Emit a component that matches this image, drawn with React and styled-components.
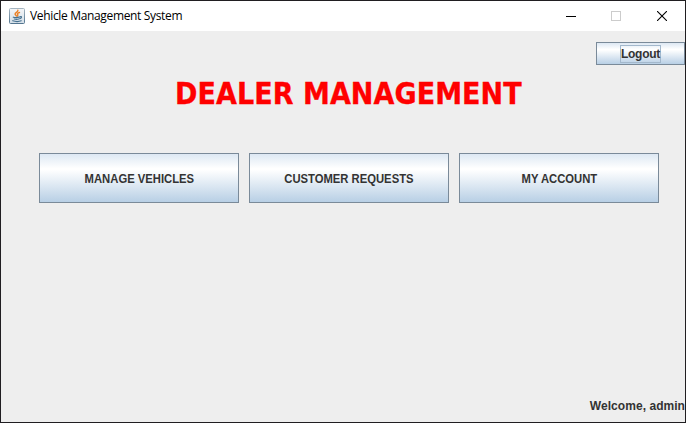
import React from "react";
import styled, { createGlobalStyle } from "styled-components";

const GlobalStyle = createGlobalStyle`
  * { box-sizing: border-box; }
  html, body { margin: 0; height: 100%; overflow: hidden; }
`;

const Window = styled.div`
  width: 686px;
  height: 423px;
  display: flex;
  flex-direction: column;
  border: 1px solid #201e21;
  background: #eeeeee;
  font-family: "Liberation Sans", Arial, sans-serif;
  color: #333333;
`;

const TitleBar = styled.header`
  height: 30px;
  flex: none;
  display: flex;
  align-items: center;
  padding-left: 8px;
  background: #ffffff;
`;

const Caption = styled.span`
  flex: 1;
  margin-left: 5px;
  font: 12px/16px "Open Sans", "Noto Sans", sans-serif;
  letter-spacing: -0.34px;
  color: #000000;
  white-space: nowrap;
`;

const WindowControl = styled.button`
  width: 46px;
  height: 30px;
  padding: 0;
  border: 0;
  background: transparent;
  display: grid;
  place-items: center;
  color: ${(p) => (p.disabled ? "#cccccc" : "#000000")};
`;

const Content = styled.main`
  flex: 1;
  display: flex;
  flex-direction: column;
`;

const TopActions = styled.div`
  display: flex;
  justify-content: flex-end;
  padding-top: 11px;
`;

const MetalButton = styled.button`
  width: ${(p) => p.$width}px;
  height: ${(p) => p.$height}px;
  display: flex;
  align-items: center;
  justify-content: center;
  padding: ${(p) => p.$padTop || 0}px 0 0;
  border: 1px solid #7a8a99;
  background: linear-gradient(#dde8f3 0%, #ffffff 30%, #ffffff 33%, #b8cfe5 100%);
  font: bold 12px/14px "Liberation Sans", Arial, sans-serif;
  letter-spacing: ${(p) => p.$tracking || 0}px;
  color: #333333;
  white-space: nowrap;
`;

const MenuLabel = styled.span`
  transform: scaleX(0.938);
`;

const FocusLabel = styled.span`
  width: 41px;
  height: 18px;
  display: flex;
  align-items: center;
  justify-content: center;
  border: 1px solid #a3b8cc;
`;

const Heading = styled.h1`
  height: 36px;
  margin: 11px 0 0 174px;
  font: bold 30px/36px "DejaVu Sans Condensed", "DejaVu Sans", sans-serif;
  font-stretch: condensed;
  letter-spacing: 0.06px;
  color: #ff0000;
  -webkit-text-stroke: 0.3px #ff0000;
  white-space: nowrap;
`;

const Menu = styled.nav`
  display: flex;
  gap: 10px;
  margin: 41px 0 0 38px;
`;

const Welcome = styled.p`
  margin: auto 0 8px;
  text-align: right;
  font: bold 12px/15px "Liberation Sans", Arial, sans-serif;
  letter-spacing: 0.05px;
  white-space: nowrap;
`;

const JavaIcon = () => (
  <svg width="16" height="16" viewBox="0 0 16 16">
    <defs>
      <linearGradient id="tile" x1="0" y1="0" x2="0" y2="1">
        <stop offset="0" stopColor="#f4f6f8" />
        <stop offset="1" stopColor="#d3dee7" />
      </linearGradient>
      <linearGradient id="edge" x1="0" y1="0" x2="0" y2="1">
        <stop offset="0" stopColor="#a4b4c0" />
        <stop offset="1" stopColor="#53758f" />
      </linearGradient>
    </defs>
    <rect x=".5" y=".5" width="15" height="15" rx="1" fill="url(#tile)" stroke="url(#edge)" />
    <g fill="none" strokeLinecap="round">
      <path d="M8.9 2.2C9.4 4 5.6 4.6 6.1 6.2c.2.7 1 .9 1.3 1.8M10.5 4.5C8.8 5 8 5.7 8.7 6.5c.4.5.2 1-.2 1.5" stroke="#ec7f22" strokeWidth="1.4" />
      <path d="M4.3 9.2c1.5.5 4 .5 6 0M11 8.7c2-.6 2 1.3-.3 2M5.3 11c1.4.4 3 .4 4.4 0M3.7 12.8c2.4.8 6.5.8 8.5 0" stroke="#45708f" strokeWidth="1.2" />
    </g>
  </svg>
);

const menuItems = ["MANAGE VEHICLES", "CUSTOMER REQUESTS", "MY ACCOUNT"];

export default function App() {
  return (
    <>
      <GlobalStyle />
      <Window>
        <TitleBar>
          <JavaIcon />
          <Caption>Vehicle Management System</Caption>
          <WindowControl aria-label="Minimize">
            <svg width="12" height="10" shapeRendering="crispEdges">
              <path d="M2 5.5h10" stroke="currentColor" />
            </svg>
          </WindowControl>
          <WindowControl aria-label="Maximize" disabled>
            <svg width="10" height="10">
              <rect x=".5" y=".5" width="9" height="9" fill="none" stroke="currentColor" />
            </svg>
          </WindowControl>
          <WindowControl aria-label="Close">
            <svg width="10" height="10">
              <path d="M0 0l10 10M10 0L0 10" stroke="currentColor" strokeWidth="1.1" />
            </svg>
          </WindowControl>
        </TitleBar>
        <Content>
          <TopActions>
            <MetalButton $width={89} $height={23} $tracking={-0.25}>
              <FocusLabel>Logout</FocusLabel>
            </MetalButton>
          </TopActions>
          <Heading>DEALER MANAGEMENT</Heading>
          <Menu>
            {menuItems.map((label) => (
              <MetalButton key={label} $width={200} $height={50} $padTop={2}>
                <MenuLabel>{label}</MenuLabel>
              </MetalButton>
            ))}
          </Menu>
          <Welcome>Welcome, admin</Welcome>
        </Content>
      </Window>
    </>
  );
}
